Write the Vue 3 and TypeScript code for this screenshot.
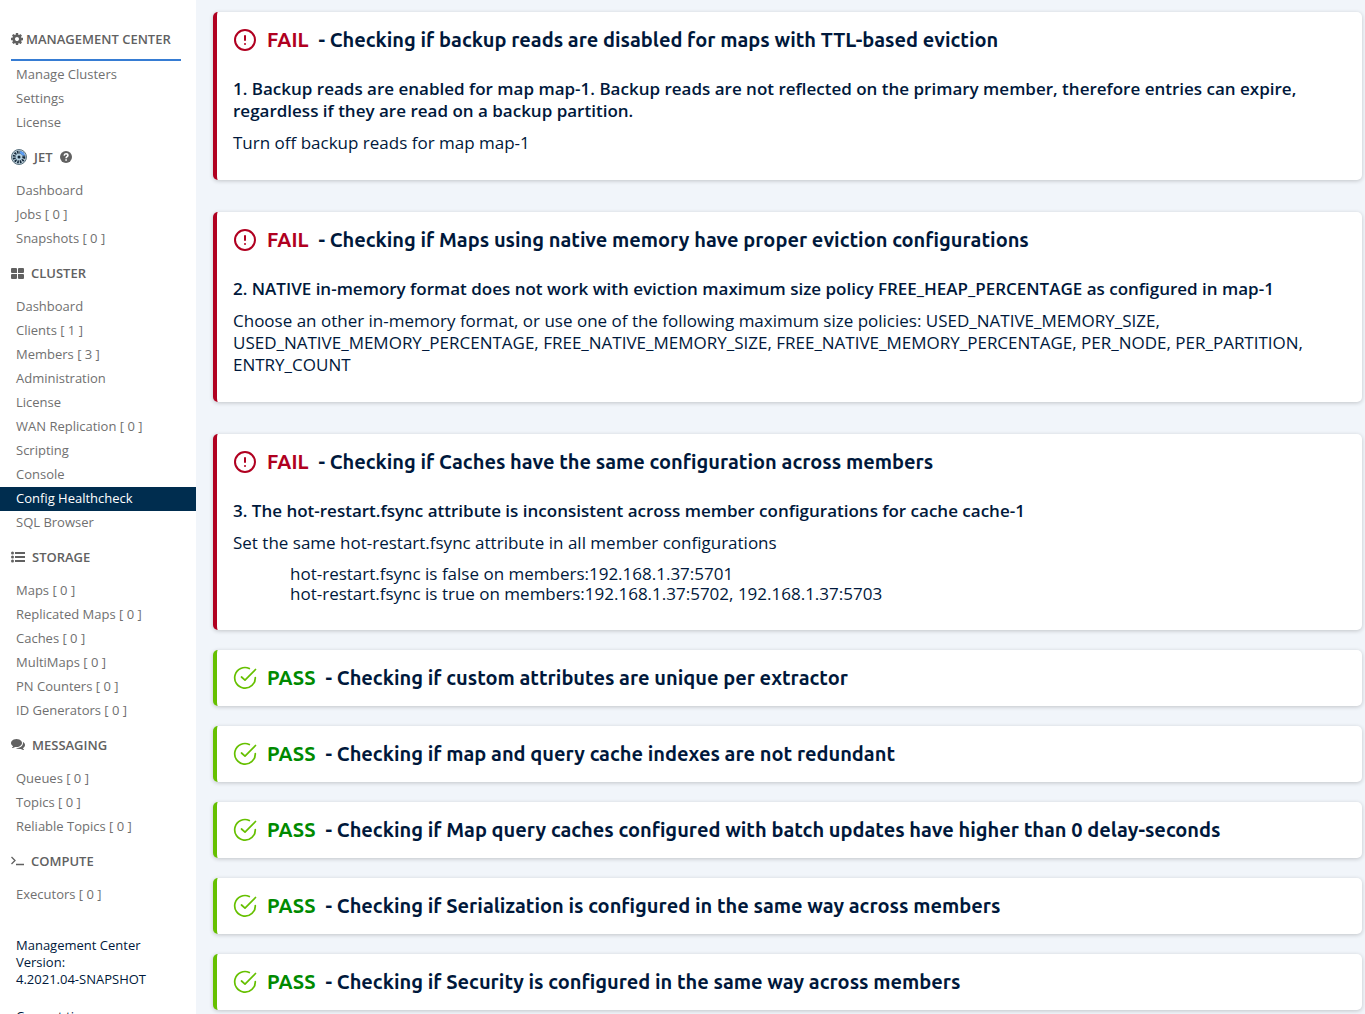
<script setup lang="ts">
type Icon = 'gear' | 'jet' | 'grid' | 'list' | 'chat' | 'prompt'
interface Section { title: string; icon: Icon; help?: boolean; items: string[] }
interface Finding { title: string; problem: string; advice: string; details?: string[] }

const active = 'Config Healthcheck'

const sections: Section[] = [
  { title: 'MANAGEMENT CENTER', icon: 'gear', items: ['Manage Clusters', 'Settings', 'License'] },
  { title: 'JET', icon: 'jet', help: true, items: ['Dashboard', 'Jobs [ 0 ]', 'Snapshots [ 0 ]'] },
  {
    title: 'CLUSTER',
    icon: 'grid',
    items: [
      'Dashboard', 'Clients [ 1 ]', 'Members [ 3 ]', 'Administration', 'License',
      'WAN Replication [ 0 ]', 'Scripting', 'Console', 'Config Healthcheck', 'SQL Browser',
    ],
  },
  {
    title: 'STORAGE',
    icon: 'list',
    items: ['Maps [ 0 ]', 'Replicated Maps [ 0 ]', 'Caches [ 0 ]', 'MultiMaps [ 0 ]', 'PN Counters [ 0 ]', 'ID Generators [ 0 ]'],
  },
  { title: 'MESSAGING', icon: 'chat', items: ['Queues [ 0 ]', 'Topics [ 0 ]', 'Reliable Topics [ 0 ]'] },
  { title: 'COMPUTE', icon: 'prompt', items: ['Executors [ 0 ]'] },
]

const failures: Finding[] = [
  {
    title: 'Checking if backup reads are disabled for maps with TTL-based eviction',
    problem: 'Backup reads are enabled for map map-1. Backup reads are not reflected on the primary member, therefore entries can expire, regardless if they are read on a backup partition.',
    advice: 'Turn off backup reads for map map-1',
  },
  {
    title: 'Checking if Maps using native memory have proper eviction configurations',
    problem: 'NATIVE in-memory format does not work with eviction maximum size policy FREE_HEAP_PERCENTAGE as configured in map-1',
    advice: 'Choose an other in-memory format, or use one of the following maximum size policies: USED_NATIVE_MEMORY_SIZE, USED_NATIVE_MEMORY_PERCENTAGE, FREE_NATIVE_MEMORY_SIZE, FREE_NATIVE_MEMORY_PERCENTAGE, PER_NODE, PER_PARTITION, ENTRY_COUNT',
  },
  {
    title: 'Checking if Caches have the same configuration across members',
    problem: 'The hot-restart.fsync attribute is inconsistent across member configurations for cache cache-1',
    advice: 'Set the same hot-restart.fsync attribute in all member configurations',
    details: [
      'hot-restart.fsync is false on members:192.168.1.37:5701',
      'hot-restart.fsync is true on members:192.168.1.37:5702, 192.168.1.37:5703',
    ],
  },
]

const passes: string[] = [
  'Checking if custom attributes are unique per extractor',
  'Checking if map and query cache indexes are not redundant',
  'Checking if Map query caches configured with batch updates have higher than 0 delay-seconds',
  'Checking if Serialization is configured in the same way across members',
  'Checking if Security is configured in the same way across members',
]
</script>

<template>
  <div class="shell">
    <aside class="sidebar">
      <nav>
        <section v-for="s in sections" :key="s.title" :class="['group', s.icon]">
          <h2 class="heading">
            <svg v-if="s.icon === 'gear'" class="glyph" width="12" height="12" viewBox="0 0 1536 1536">
              <path fill="currentColor" d="M1024 768q0-106-75-181t-181-75-181 75-75 181 75 181 181 75 181-75 75-181zm512-109v222q0 12-8 23t-20 13l-185 28q-19 54-39 91 35 50 107 138 10 12 10 25t-9 23q-27 37-99 108t-94 71q-12 0-26-9l-138-108q-44 23-91 38-16 136-29 186-7 28-36 28H657q-14 0-24.500-8.500T621 1506l-28-184q-49-16-90-37l-141 107q-10 9-25 9-14 0-25-11-126-114-165-168-7-10-7-23 0-12 8-23 15-21 51-66.500t54-70.500q-27-50-41-99L29 913q-13-2-21-12.500T0 877V655q0-12 8-23t19-13l186-28q14-46 39-92-40-57-107-138-10-12-10-24 0-10 9-23 26-36 98.500-107.500T337 135q13 0 26 10l138 107q44-23 91-38 16-136 29-186 7-28 36-28h222q14 0 24.500 8.500T915 30l28 184q49 16 90 37l142-107q9-9 24-9 13 0 25 10 129 119 165 170 7 8 7 22 0 12-8 23-15 21-51 66.500t-54 70.500q26 50 41 98l183 28q13 2 21 12.500t8 23.500z" />
            </svg>
            <svg v-else-if="s.icon === 'jet'" class="glyph" width="16" height="16" viewBox="0 0 16 16">
              <circle cx="8" cy="8" r="7.500" fill="#b9cbd6" stroke="#5d7480" />
              <circle cx="8" cy="8" r="4.800" fill="none" stroke="#12283a" stroke-width="3" stroke-dasharray="1.500 1.010" />
              <path d="M9 2a6 6 0 0 1 5 5l-3-1-2-2z" fill="#5b9df5" />
              <circle cx="8" cy="8" r="3.200" fill="#b3d0e0" />
              <circle cx="8" cy="8" r="1.500" fill="#12283a" />
            </svg>
            <svg v-else-if="s.icon === 'grid'" class="glyph" width="13" height="11" viewBox="0 0 13 11">
              <path fill="currentColor" d="M1 0h4a1 1 0 0 1 1 1v4H1a1 1 0 0 1-1-1V1a1 1 0 0 1 1-1zM8 0h4a1 1 0 0 1 1 1v3a1 1 0 0 1-1 1H7V1a1 1 0 0 1 1-1zM1 6h5v4a1 1 0 0 1-1 1H1a1 1 0 0 1-1-1V7a1 1 0 0 1 1-1zM7 6h5a1 1 0 0 1 1 1v3a1 1 0 0 1-1 1H8a1 1 0 0 1-1-1z" />
            </svg>
            <svg v-else-if="s.icon === 'list'" class="glyph" width="14" height="12" viewBox="0 0 14 12">
              <path fill="currentColor" d="M4 1h10v2H4zM4 5h10v2H4zM4 9h10v2H4z" />
              <circle cx="1.500" cy="2" r="1.500" fill="currentColor" />
              <circle cx="1.500" cy="6" r="1.500" fill="currentColor" />
              <circle cx="1.500" cy="10" r="1.500" fill="currentColor" />
            </svg>
            <svg v-else-if="s.icon === 'chat'" class="glyph" width="14" height="12" viewBox="0 0 1792 1536">
              <path fill="currentColor" d="M1408 512q0 139-94 257t-256.500 186.500T704 1024q-86 0-176-16-124 88-278 128-36 9-86 16h-3q-11 0-20.500-8t-11.500-21q-1-3-1-6.500t.5-6.500 2-6l2.500-5 3.500-5.500 4-5 4.500-5 4-4.500q5-6 23-25t26-29.500 22.500-29 25-38.500 20.500-44q-124-72-195-177T0 512q0-139 94-257T350.500 68.500 704 0t353.500 68.500T1314 255t94 257zm384 256q0 120-71 224.500T1526 1169q10 24 20.500 44t25 38.500 22.500 29 26 29.500 23 25q1 1 4 4.500t4.500 5 4 5 3.500 5.500l2.500 5 2 6 .5 6.500-1 6.500q-3 14-13 22t-22 7q-50-7-86-16-154-40-278-128-90 16-176 16-271 0-472-132 58 4 88 4 161 0 309-45t264-129q125-92 192-212t67-254q0-77-23-152 129 71 204 178t75 230z" />
            </svg>
            <svg v-else class="glyph" width="13" height="10" viewBox="0 0 13 10">
              <path fill="none" stroke="currentColor" stroke-width="1.300" d="M.5 1l3.500 3.500L.5 8M5 8.500h8" />
            </svg>
            <span>{{ s.title }}</span>
            <svg v-if="s.help" class="help" width="12" height="12" viewBox="0 0 12 12">
              <circle cx="6" cy="6" r="6" fill="currentColor" />
              <path d="M4.200 4.600C4.300 3.300 5 2.800 6 2.800c1.100 0 1.900.7 1.900 1.600C7.900 5.700 6.100 5.700 6.100 7.200M6.100 8.200v1.600" fill="none" stroke="#fff" stroke-width="1.600" />
            </svg>
          </h2>
          <ul>
            <li v-for="item in s.items" :key="item">
              <a href="#" :class="{ active: item === active }">{{ item }}</a>
            </li>
          </ul>
        </section>
      </nav>
      <footer class="about">
        <p>Management Center Version: <span class="version">4.2021.04-SNAPSHOT</span></p>
        <p>Current time:</p>
      </footer>
    </aside>

    <main class="results">
      <div class="failures">
        <article v-for="(f, i) in failures" :key="f.title" class="card fail">
          <h3>
            <svg class="state" width="24" height="24" viewBox="0 0 24 24">
              <circle cx="12" cy="12" r="10" />
              <path d="M12 8v4M12 16h.01" />
            </svg>
            <span class="verdict">FAIL</span>
            <span>- {{ f.title }}</span>
          </h3>
          <div class="body">
            <p class="problem">{{ i + 1 }}. {{ f.problem }}</p>
            <p>{{ f.advice }}</p>
            <ul v-if="f.details">
              <li v-for="d in f.details" :key="d">{{ d }}</li>
            </ul>
          </div>
        </article>
      </div>
      <article v-for="p in passes" :key="p" class="card pass">
        <h3>
          <svg class="state" width="24" height="24" viewBox="0 0 24 24">
            <path d="M16.300 2.500A10.300 10.300 0 1 0 22.300 11.500" />
            <path d="M22.500 3.500L12 14.200L8.500 11" />
          </svg>
          <span class="verdict">PASS</span>
          <span>- {{ p }}</span>
        </h3>
      </article>
    </main>
  </div>
</template>

<style>
body {
  margin: 0;
  background: #f1f5fa;
}
</style>

<style scoped>
.shell {
  display: flex;
  height: 100vh;
  overflow: hidden;
  color: #00183b;
  font-family: "Open Sans", "Noto Sans", sans-serif;
}
h2, h3, p, ul {
  margin: 0;
  padding: 0;
}
ul {
  list-style: none;
}
.sidebar {
  box-sizing: border-box;
  flex: 0 0 196px;
  padding-top: 18px;
  overflow-y: auto;
  scrollbar-width: none;
  background: #fff;
}
.heading {
  display: flex;
  align-items: center;
  gap: 7px;
  height: 44px;
  margin: 0 15px 0 11px;
  color: #616161;
  font-size: 13px;
  font-weight: 600;
  line-height: 18px;
}
.gear .heading {
  box-sizing: border-box;
  gap: 3px;
  height: 43px;
  margin-bottom: 2px;
  border-bottom: 2px solid #367cd3;
}
.glyph, .help, .state {
  flex: none;
}
.sidebar a {
  display: block;
  padding: 0 16px 2px;
  color: #707070;
  font-size: 13px;
  line-height: 22px;
  text-decoration: none;
}
.sidebar a.active {
  background: #002d4f;
  color: #fff;
}
.about {
  display: flex;
  flex-direction: column;
  gap: 20px;
  padding: 30px 40px 20px 16px;
  font-size: 13px;
  line-height: 17px;
}
.version {
  white-space: nowrap;
}
.results {
  display: flex;
  flex: 1;
  flex-direction: column;
  gap: 20px;
  min-width: 0;
  padding: 12px 3px 20px 17px;
  overflow-y: auto;
  scrollbar-width: none;
}
.failures {
  display: flex;
  flex-direction: column;
  gap: 32px;
}
.card {
  padding: 16px;
  border-left: 4px solid;
  border-radius: 5px;
  background: #fff;
  box-shadow: 0 1px 4px rgba(0, 0, 0, 0.2);
}
.card.fail {
  border-color: #b00020;
}
.card.pass {
  border-color: #66c000;
}
h3 {
  display: flex;
  align-items: center;
  gap: 10px;
  font-family: Ubuntu, "Noto Sans", sans-serif;
  font-size: 20px;
  font-weight: 700;
  line-height: 24px;
}
.state {
  fill: none;
  stroke: currentColor;
  stroke-width: 2;
  stroke-linecap: round;
  stroke-linejoin: round;
}
.pass .state {
  stroke-width: 1.7;
}
.fail .state, .fail .verdict {
  color: #b00020;
}
.pass .state {
  color: #66c000;
}
.pass .verdict {
  color: #008a00;
}
.body {
  display: flex;
  flex-direction: column;
  gap: 10px;
  padding: 26px 0 10px;
  font-size: 17px;
  line-height: 22px;
}
.problem {
  font-weight: 600;
}
.body ul {
  padding-left: 57px;
  line-height: 20px;
}
</style>
